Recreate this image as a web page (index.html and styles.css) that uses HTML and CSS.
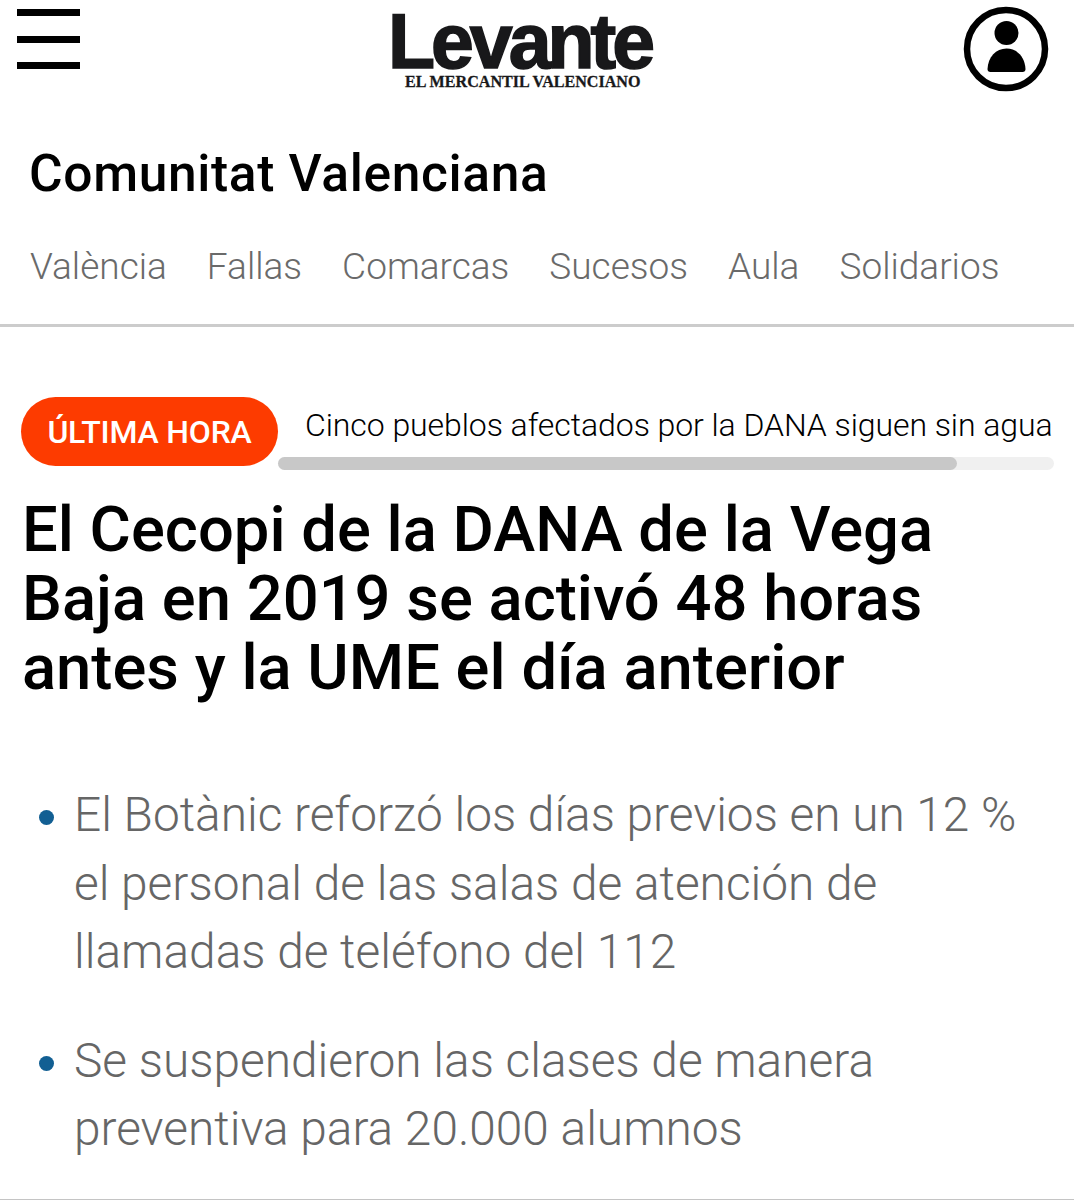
FILE: index.html
```html
<!DOCTYPE html>
<html lang="es">
<head>
  <meta charset="utf-8">
  <title>Levante-EMV</title>
  <link rel="stylesheet" href="styles.css">
</head>
<body>
  <header class="header">
    <div class="menu">
      <span></span>
      <span></span>
      <span></span>
    </div>
    <div class="logo">
      <svg width="280" height="100" viewBox="0 0 280 100">
        <text class="logo-name" x="5" y="68" textLength="267">Levante</text>
        <text class="logo-sub" x="22" y="87" textLength="235.500" lengthAdjust="spacingAndGlyphs">EL MERCANTIL VALENCIANO</text>
      </svg>
    </div>
    <svg class="user" width="86" height="86" viewBox="0 0 86 86">
      <circle cx="43" cy="43" r="39" fill="none" stroke="#000" stroke-width="6.5"/>
      <circle cx="43.5" cy="27" r="12"/>
      <path d="M24.500 63C25 51 33 42.500 43.500 42.500S62 51 62.500 63Q62.500 66 59.500 66H27.500Q24.500 66 24.500 63Z"/>
    </svg>
  </header>

  <div class="section-title"><span>Comunitat Valenciana</span></div>
  <nav class="nav">
    <a>València</a>
    <a>Fallas</a>
    <a>Comarcas</a>
    <a>Sucesos</a>
    <a>Aula</a>
    <a>Solidarios</a>
  </nav>

  <main class="content">
    <div class="breaking">
      <span class="badge">ÚLTIMA HORA</span>
      <div class="ticker">
        <span class="ticker-text">Cinco pueblos afectados por la DANA siguen sin agua</span>
        <div class="progress"><div class="progress-bar"></div></div>
      </div>
    </div>
    <h1>El Cecopi de la DANA de la Vega<br>Baja en 2019 se activó 48 horas<br>antes y la UME el día anterior</h1>
    <ul class="summary">
      <li>El Botànic reforzó los días previos en un 12 %<br>el personal de las salas de atención de<br>llamadas de teléfono del 112</li>
      <li>Se suspendieron las clases de manera<br>preventiva para 20.000 alumnos</li>
    </ul>
  </main>
</body>
</html>
```
FILE: styles.css
```css
* {
  box-sizing: border-box;
}

body {
  margin: 0;
  background: #fff;
  color: #000;
  font-family: Roboto, "Liberation Sans", sans-serif;
}

.header {
  display: flex;
  justify-content: space-between;
  align-items: flex-start;
  height: 120px;
  padding: 0 25px 0 17px;
}

.menu {
  display: flex;
  flex-direction: column;
  gap: 19.5px;
  width: 65px;
  padding: 9px 2px 0 0;
}

.menu span {
  height: 7px;
  background: #000;
}

.logo svg {
  display: block;
  overflow: visible;
}

.logo-name {
  font: bold 77px "Liberation Sans", sans-serif;
  fill: #18181a;
  stroke: #18181a;
  stroke-width: 1.6px;
}

.logo-sub {
  font: bold 17px "Liberation Serif", serif;
  fill: #18181a;
  stroke: #18181a;
  stroke-width: 0.3px;
}

.user {
  margin-top: 6px;
}

.section-title {
  height: 105px;
  padding: 24px 30px 0 29px;
  font-size: 51.5px;
  font-weight: 500;
  line-height: 60px;
  letter-spacing: 0.65px;
}

.nav {
  display: flex;
  gap: 40px;
  height: 102px;
  padding: 22px 30px 0;
  border-bottom: 3px solid #ccc;
  color: #6a6a6a;
  font-size: 37px;
  font-weight: 300;
  line-height: 40px;
}

.content {
  height: 873px;
  padding: 70px 20px 0;
  border-bottom: 1px solid #c4c4c4;
}

.breaking {
  display: flex;
}

.badge {
  width: 257px;
  height: 69px;
  margin-left: 1px;
  border-radius: 35px;
  background: #fd3b00;
  color: #fff;
  font-size: 32px;
  font-weight: 500;
  line-height: 70px;
  letter-spacing: -0.2px;
  text-align: center;
}

.ticker {
  width: 776px;
}

.ticker-text {
  display: block;
  height: 60px;
  padding-left: 27px;
  font-size: 32px;
  font-weight: 300;
  line-height: 56px;
  letter-spacing: -0.07px;
  white-space: nowrap;
}

.progress {
  height: 13px;
  border-radius: 7px;
  background: #f0f0f0;
}

.progress-bar {
  width: 679px;
  height: 13px;
  border-radius: 7px;
  background: #c8c8c8;
}

h1 {
  margin: 25px 0 0 2px;
  font-size: 63.3px;
  font-weight: 500;
  line-height: 69px;
  white-space: nowrap;
}

.summary {
  margin: 79px 0 0;
  padding: 0;
  list-style: none;
  color: #666;
  font-size: 47.8px;
  font-weight: 300;
  line-height: 68.5px;
  white-space: nowrap;
}

.summary li {
  display: flex;
  margin-bottom: 40px;
}

.summary li::before {
  content: "";
  width: 15px;
  height: 15px;
  margin: 29px 20px 0 19px;
  border-radius: 50%;
  background: #125f93;
}
```
